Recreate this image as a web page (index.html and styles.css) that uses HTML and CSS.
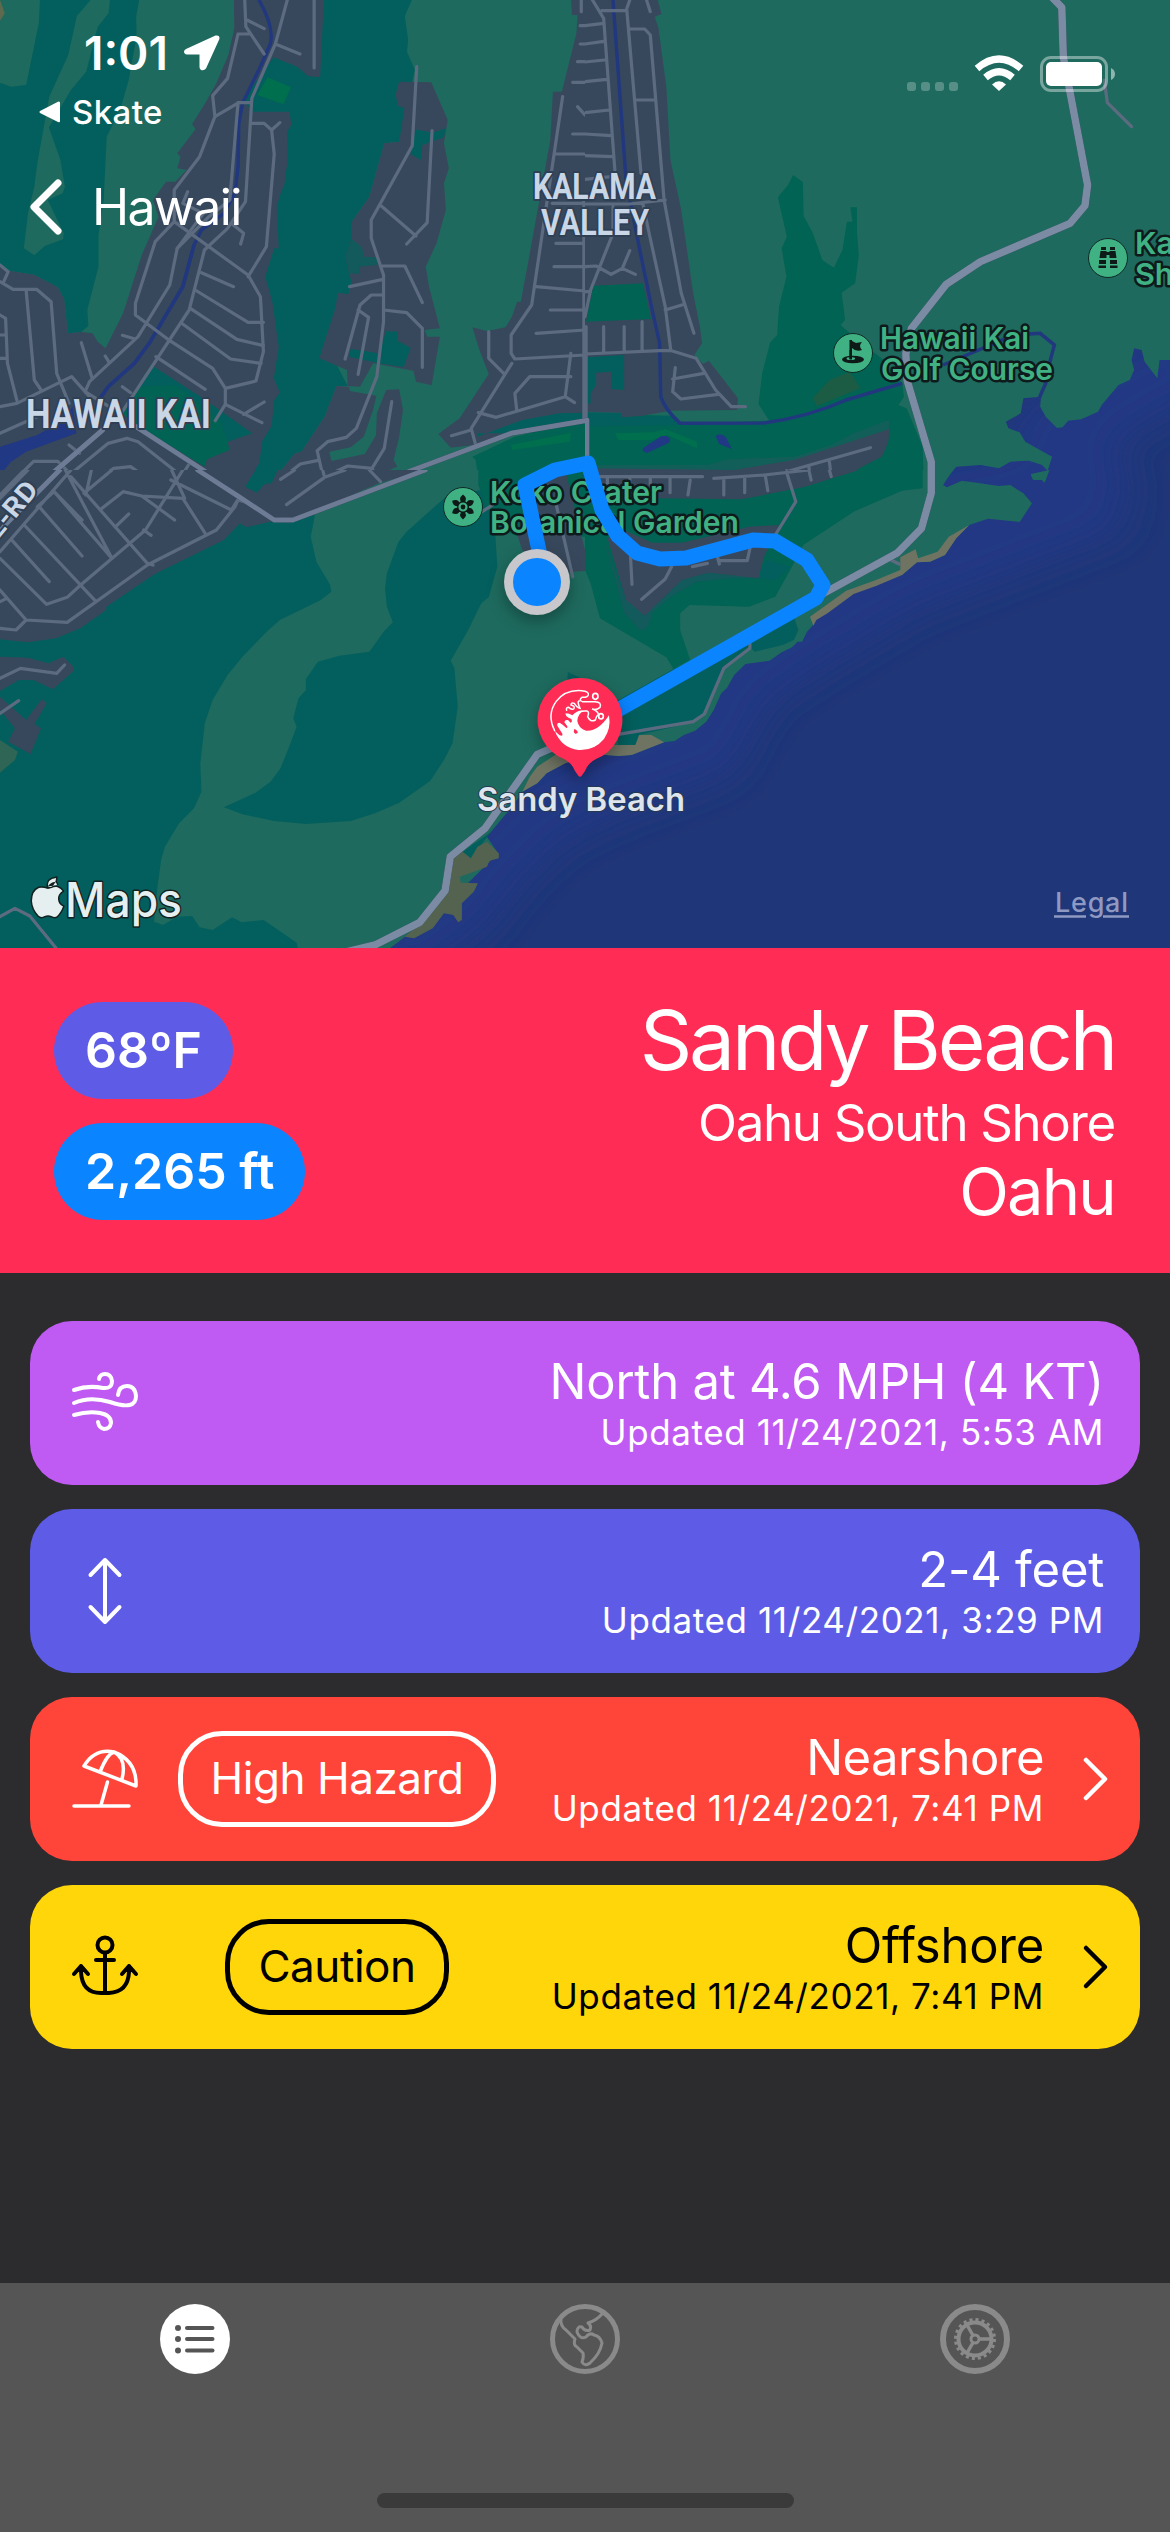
FILE: index.html
```html
<!DOCTYPE html>
<html lang="en">
<head>
<meta charset="utf-8">
<title>Sandy Beach</title>
<link rel="stylesheet" href="styles.css">
</head>
<body>
<main class="screen">
  <section class="hero">
    <svg class="map" viewBox="0 0 1170 948">
      <defs><filter id="soft" x="-20%" y="-20%" width="140%" height="140%"><feGaussianBlur stdDeviation="18"/></filter></defs>
      <rect class="deep" width="1170" height="948"/>
      <path class="shallow" filter="url(#soft)" d="M1200 350 1060 430 1080 470 980 490 1040 520 900 575 800 635 740 675 705 740 600 780 540 810 490 860 460 900 380 960"/>

      <!-- north-west tile -->
      <svg x="0" y="0" width="585" height="480" viewBox="0 0 1568 1440" preserveAspectRatio="none">
        <rect class="land" width="1568" height="1440"/>
        <path fill="#5d6a4d" d="M0 0 13 40 0 62z"/>
        <path class="forest" d="M107 0 104 70 70 255 30 260 0 248V795L24 812 92 824 155 862 172 897 182 1000 217 996 237 978 234 930 250 860 264 800V705L278 600 286 410 322 330 345 240 366 110 365 50 373 0z"/>
        <path class="land" d="M243 0 206 48 183 165 132 290 100 490 92 560 75 640 64 745 92 766 120 738 169 718 171 700 128 600 168 580 174 560 162 480 131 382 190 270 231 215 262 80 291 40 295 0z"/>
        <path class="urban" d="M627 0 628 85 612 165 580 250 550 310 515 372 524 388 475 460 484 470 475 505 500 510 470 545 445 545 410 600 425 650 380 765 330 940 283 1045 262 1025 248 1000 217 996 182 1000 172 897 155 862 92 824 24 812 0 795V1440H740L868 700V0z"/>
        <path class="forest" d="M868 0H1104L1085 48 1094 120 1091 155 1112 210 1070 425 1030 430 990 590 943 665V900L905 1100 932 1158 902 1158 870 1250 808 1355 790 1360 733 1440H665L695 1390 703 1323 728 1278 735 1200 750 1178 734 1135 747 1040 730 905 711 830 722 790 735 745 747 745 742 620 752 580 762 555 771 480 769 395 781 375 776 335 678 335 650 300 733 172 797 200 825 228 858 232z"/>
        <path class="green" d="M717 232 780 262 760 313 690 285z"/>
        <path class="urban" d="M1070 245 1156 247 1200 360 1190 430 1203 505 1190 550 1195 630 1170 730 1141 800 1150 860 1179 985 1138 990 1145 1010 1179 1010 1157 1156 1115 1145 1108 1112 1000 1090 965 1160 932 1158 930 1110 856 1075 900 920 905 878 933 883 943 850 925 770 943 715V665L990 590 1030 430 1070 425 1084 325 1068 318 1060 285z"/>
        <path class="urban" d="M902 1158 935 1160 938 1173 1009 1187 1000 1230 975 1310 940 1342 883 1355 888 1383 978 1362 1008 1305 1010 1240 1035 1170 1070 1168 1080 1230 1070 1310 1055 1380 1065 1400 1015 1422 1025 1440H733L790 1360 808 1355 870 1250z"/>
        <path class="forest" d="M1113 388 1160 398 1195 385 1190 412 1132 435 1128 480 1100 462zM1035 993 1067 995 1065 1022 1101 1043 1082 1102 1015 1090 935 1070 940 1047 1015 1060z"/>
        <path fill="#125a5b" d="M943 718 970 740 975 770 1010 772 1012 795 965 800 963 822 938 820 925 770z"/>
        <path class="urban" d="M1531 0 1533 45 1548 45 1545 100 1506 275 1482 275 1475 420 1420 760 1396 905 1386 905 1372 950 1355 982 1305 993 1266 982 1285 1050 1310 1122 1232 1255 1175 1302 1208 1343 1270 1335 1400 1285 1568 1250V0z"/>
        <path class="forest" d="M1280 1310 1400 1260 1500 1240 1568 1238V1300H1280z"/>
        <path class="park" d="M1266 1370 1380 1310 1568 1262V1440H1282L1275 1380z"/>
        <path class="green" d="M1370 1335 1530 1298 1528 1325 1372 1350z"/>
        <path class="park" d="M405 1095 550 1200 675 1300 610 1325 615 1350 555 1378 548 1400 380 1285 325 1240z"/>
        <path class="forest" d="M405 1095 550 1200 675 1300 610 1325 590 1260 470 1155 370 1160z"/>
        <path class="water" d="M0 1340 100 1305 160 1265 195 1220 205 1300 70 1355 30 1385 0 1425z"/>
        <g class="creek"><path d="M694 0Q735 80 725 130L700 195 650 310 640 370 638 500 630 580 600 640 540 690 520 735 490 860 400 1030 360 1090 290 1160 265 1200"/><path d="M520 735 490 860 400 1030 360 1090 290 1160 265 1200" stroke-width="6"/></g>
        <g class="road">
          <path d="M656 0 659 80 708 162M662 60 708 86M770 0 738 132 675 295 658 605 610 685 548 750 507 930 325 1240M738 132 804 162M842 0V204M669 102H638L610 235 570 287 576 350 640 308H672M576 350 535 470 467 570V665L416 725 363 910V945L450 1018 570 1105 604 1165V1213L702 1268M467 665 665 825 698 890 706 1055 686 1143 604 1165M672 370H708L728 390 735 462 714 740 665 830M728 390 750 368M638 308 616 600 560 650 475 745 455 855 370 1010 240 1145 228 1175 300 1225"/>
          <path d="M503 575 490 610 545 640 475 745M620 670 653 700 645 732M540 818 626 860M523 870 665 967H706M510 925 635 1018 706 1037M485 968 618 1077 700 1090M418 1070 550 1168M328 1006 360 1016M282 1068 293 1088M218 1028 247 1135M328 1160 350 1178M604 1213 577 1262M708 1206 653 1243"/>
          <path d="M0 845 35 868H98L137 905 152 1120 185 1210M0 795 22 815 8 850M70 870 92 1140 110 1170M0 945 15 955 20 1090 45 1200M0 1220 45 1210 192 1130 240 1190M0 1005H15M0 1075H18M0 1300 120 1240M40 1440 90 1384H155L205 1440M185 1335 213 1360M170 1440 290 1330 340 1315 370 1325 500 1440M260 1440 305 1405 350 1400 400 1440M505 1395 480 1440"/>
          <path d="M1117 200 1105 437 995 660V715L1028 825V965L1010 1130 955 1285 928 1312 878 1325 850 1352 868 1440M1158 392 1145 668 1090 732M1022 618 1115 708M1025 798H1085L1132 908M1026 838 937 860M1028 885H995L965 915 925 1077M960 930 988 952 960 1123M1028 930 1090 938 1132 985V1102M1050 1205 1030 1345 997 1405 1015 1440M850 1382 805 1392 750 1440M870 1430 932 1398 997 1405"/>
          <path d="M1508 290 1425 915 1370 1005V1060L1380 1077 1568 1065M1558 0V35M1555 77H1568M1555 132H1568M1548 185H1568M1535 247H1568M1548 320 1568 345M1535 402H1568M1490 462H1568M1480 610H1568M1490 730H1568M1485 800H1568M1437 860 1568 873M1475 930H1568M1437 1000 1568 990M1310 995V1075L1350 1120M1372 1090 1263 1285 1275 1335M1263 1290 1210 1307M1530 1060 1515 1190 1330 1252 1282 1238M1515 1190 1540 1208M1530 1130H1420L1380 1180 1385 1230M1565 600V1262"/>
        </g>
        <path class="road mid" d="M1568 1262 1370 1300 1035 1440M365 1280 585 1440M275 1290 120 1440"/>
      </svg>

      <!-- north-east tile -->
      <svg x="585" y="0" width="585" height="480" viewBox="0 0 1568 1440" preserveAspectRatio="none">
        <path class="land" d="M0 0H1568V1080L1540 1080 1534 1135 1500 1085 1492 1050 1472 1045 1465 1080 1472 1110 1460 1140 1430 1155 1385 1215 1375 1235 1330 1258 1295 1262 1280 1282 1265 1284 1235 1250 1220 1220 1222 1190 1175 1195 1168 1240 1128 1265 1135 1285 1165 1297 1180 1325 1252 1370 1240 1412 1225 1395 1190 1382 1140 1385 1110 1405 1060 1395 995 1400 967 1440H0zM1195 1425 1240 1412 1235 1440H1202z"/>
        <path class="park" d="M0 1240 230 1247 260 1272 494 1262 465 1212 475 1120 496 1028 515 1005 520 920 540 830 527 745 541 710 517 592 544 555 558 525 584 547 586 648 611 700 636 780 667 803 690 750 702 665 717 665 711 622H729V700L734 765 724 850 688 878 697 960 685 975 710 1000 800 1080 850 1150 855 1190 840 1215 862 1225 905 1340 908 1440H0z"/>
        <path class="forest" d="M0 1237 98 1238 100 1252 230 1247 255 1274 0 1280z"/>
        <path fill="#125f59" d="M0 1395H330L380 1378 560 1370 660 1335 720 1300 815 1260V1300L500 1410H0z"/>
        <path class="urban" d="M0 0H195L205 42 187 50 197 85 218 260 229 480 258 630 290 880 308 980 314 1030 293 1065 317 1092 332 1082 410 1195 408 1230 230 1232 150 1248 100 1252 98 1238 0 1235z"/>
        <path class="park" d="M22 857 155 850 177 957 3 965z"/>
        <path class="forest" d="M3 1072 105 1065V1170L70 1167V1115L30 1118V1155L15 1180V1210L3 1215z"/>
        <path fill="#1c5c44" d="M610 1195 655 1140 710 1115 738 1165 622 1218z"/>
        <path class="urban" d="M0 1405 400 1410 560 1380 700 1330 818 1286 812 1330 795 1370 700 1425 660 1440H0z"/>
        <path class="green" d="M80 1300 90 1320H180L220 1305 300 1345V1325L215 1287 185 1297z"/>
        <path class="water" d="M155 1345 205 1308Q235 1305 225 1328L168 1358Q153 1358 155 1345zM350 1308Q365 1298 378 1312L393 1347 360 1332z"/>
        <g class="creek"><path d="M75 0 110 540 145 740 180 930 200 1030 203 1190Q215 1230 255 1270L480 1269Q600 1250 700 1200L850 1150M960 1095 1150 1005 1220 1000 1258 1035 1245 1090 1235 1150 1215 1200"/></g>
        <g class="road">
          <path d="M20 0 50 55 80 510M45 32H110L120 0M165 0 175 35M112 30 150 520M118 87H160L175 105 212 600 258 880 292 1000M0 77 50 70M0 132 50 124M0 186 52 180M0 245 58 238M0 338 65 330M0 402 70 407M0 467 75 470M133 300H188M0 538 70 530M0 612H120L215 600M155 610 170 690 215 920 230 1052M215 930 262 914M75 620V700L15 870 0 950M0 800 30 798 70 823 100 805 135 823M100 805 120 752M50 980V1055M105 980V1055M153 965V1050M0 1062 200 1052H232L298 1075 350 1170 392 1220H430M242 1103 235 1175 257 1197 357 1183M235 1137 318 1120M3 980V1260M0 875H15M0 1430H315M345 1435 540 1415 765 1343M540 1412 548 1440M600 1400 605 1440M655 1385 660 1430M60 1430V1440M120 1430V1440M175 1430V1440M430 1430V1440"/>
          <path d="M1392 240 1400 308 1465 380"/>
        </g>
        <path class="road mid" d="M5 1260V1400"/>
        <path class="road major" d="M1250 -10 1278 22 1282 170 1347 555 1340 617 1300 670 1060 785 968 853 875 985 860 1060 863 1140 928 1385V1440"/>
      </svg>

      <!-- south-west tile -->
      <svg x="0" y="470" width="585" height="478" viewBox="0 0 1568 1434" preserveAspectRatio="none">
        <path class="land" d="M0 0H1568V860L1515 880 1465 910 1440 940 1400 965 1380 1000 1305 1100 1335 1150 1200 1300 1045 1435H0z"/>
        <path class="forest" d="M0 0H700L845 130 833 200 848 275 885 345 888 365 860 390 750 450 715 485 650 560 610 615 570 690 549 760 537 880 540 965 520 1015 480 1060 442 1130 432 1170 422 1250 413 1355 437 1365 475 1340 515 1338 535 1372 570 1380 622 1342 648 1357 707 1350 795 1418 800 1440H0z"/>
        <path class="urban" d="M0 0H1140L1015 40 780 155 735 152 660 172 643 160 600 210 415 312 285 410V420L215 475 150 505 75 517 0 508z"/>
        <path class="urban" d="M0 560 75 563 130 580 170 560 197 590 195 605 142 658 90 630H50L0 663zM0 680 70 750 112 687 125 700 92 762 110 775 82 852 22 815 40 775 0 720z"/>
        <path class="forest" d="M685 0H745L728 40 710 42 688 68 657 50z"/>
        <path fill="#2f6555" d="M0 810 48 845 40 870 0 908z"/>
        <path class="forest" d="M1195 80 1090 185 1068 215 1037 310 1032 355 1037 410 1053 457 1030 483 990 545 910 557 852 575 820 627V660L800 685 786 745 795 770 775 830 752 895 725 935 685 968 600 1012 650 1033 735 1053 820 1062 940 1053 1005 1030 1070 998 1153 933 1190 870 1213 820 1227 710 1218 595 1208 572 1255 480 1290 400 1310 382 1333 290 1325 150 1290 60z"/>
        <path class="park" d="M1282 0H1568V200L1390 200 1325 170 1282 45z"/>
        <path class="urban" d="M1385 190 1430 30 1515 0 1568 240V303L1470 310 1400 240z"/>
        <path class="forest" d="M1522 606 1568 630V640H1520zM1190 1262 1200 1170 1240 1145 1305 1095 1320 1080 1262 1165z"/>
        <path fill="#53634f" d="M1305 1115 1280 1130 1262 1165 1240 1145 1215 1165 1200 1270 1130 1360 1045 1434 1085 1400 1110 1405 1160 1375 1190 1330 1215 1335 1228 1357 1238 1350V1300L1270 1265 1281 1240 1235 1238 1232 1220 1270 1205 1305 1190 1312 1172 1337 1165V1150z"/>
        <path class="sand" d="M1495 850 1440 890 1420 920 1400 965 1440 940 1465 910 1515 880 1568 862V840z"/>
        <g class="road">
          <path d="M0 75 65 0M75 0 0 85M175 0 300 265M225 70 300 0M145 65 220 150M190 20 395 280 410 285M270 118 330 65 380 78 468 150M490 0 390 180 213 348 180 382 125 403 0 265M310 170 345 132M385 180 405 196M245 0 230 75M380 78 490 85 550 190M495 85 460 0M458 30 620 120 640 85 630 110 580 180 395 285 180 457 70 450 0 360M0 245 105 110 190 0M105 110 220 258M100 110 145 65 300 265M65 165 255 392M30 208 132 335M0 475 43 480 70 450M0 395 18 385M638 90 655 95M752 28 790 0M865 0 870 22 768 104M870 22 925 0M990 0 1020 35M0 625 55 595 152 610 173 585M0 730 50 692M0 1340 40 1315 80 1338 150 1434M1285 130 1320 105M1490 100 1535 320"/>
        </g>
        <path class="road mid" d="M1140 0 785 150H735L640 80 530 0M160 0 0 180"/>
        <path class="road major" d="M1568 790 1440 853 1300 1075 1207 1160 1193 1262 1125 1357 1005 1425 930 1445"/>
      </svg>

      <!-- south-east tile -->
      <svg x="585" y="470" width="585" height="478" viewBox="0 0 1568 1434" preserveAspectRatio="none">
        <path class="land" d="M0 0H985L960 45 970 52 1010 32 1050 38 1110 48 1140 45 1175 70 1198 100 1165 156 1080 146 1030 165 995 205 965 255 925 275 890 277 850 315 820 318 780 348 745 352 700 375 650 420 615 450 610 467 595 485 582 515 570 515 555 532 525 548 495 572 430 582 400 615 380 655 365 670 345 720 325 755 295 782 265 795 240 813 212 817 125 855 90 858 0 850zM1195 12 1245 0 1232 38 1222 28 1200 28z"/>
        <path class="park" d="M0 0H905V55L850 62 720 125 585 225 550 300 510 380 440 410 280 405 255 430V480L282 570 237 597 218 562 40 445 15 340 0 300z"/>
        <path class="forest" d="M0 640 90 690 237 597 560 440 572 480 560 510 530 525 455 545 440 530 372 595 320 735 290 757 145 795 135 825H88V790L0 810z"/>
        <path class="forest" d="M485 270 550 290 510 330 465 325z"/>
        <path fill="#125a5b" d="M50 205 110 390 160 437 260 330 330 308 465 325 390 325 300 335 230 380 180 430Q170 490 145 478L105 430z"/>
        <path class="urban" d="M0 0H735L700 12 590 50 420 88 200 85 0 60z"/>
        <path class="urban" d="M60 205 105 180 180 218 260 218 440 170 520 165 480 260 465 325 330 308 260 330 160 437 110 390z"/>
        <path class="sand" d="M1030 165 975 200 945 245 893 265 886 238 845 262V300L780 330 700 362 603 440 612 467 620 450 650 430 720 372 780 348 850 315 890 277 925 275 965 255 995 205zM145 795H178L212 817 125 855 90 858 0 850V825H135z"/>
        <g class="road">
          <path d="M0 20H315M345 25 480 15 600 0M60 20V50M120 20V60M175 20V60M228 25V68M282 30 276 75M372 25V75M428 20V68M483 15 490 62M540 5 565 95 510 195M600 0 606 30M655 0 660 20M122 260 126 343M232 290 215 327 152 388M288 290 328 280M355 260 360 282M358 272H435L442 235M442 520V535L372 595 320 732 290 755 90 793M820 270 842 282"/>
        </g>
        <path class="road major" d="M928 0V70L902 175 838 248 640 370"/>
      </svg>

      <g class="place">
        <text x="26" y="428" font-size="41" textLength="185" lengthAdjust="spacingAndGlyphs">HAWAII KAI</text>
        <text x="533" y="199" font-size="36" textLength="123" lengthAdjust="spacingAndGlyphs">KALAMA</text>
        <text x="541" y="235" font-size="36" textLength="108" lengthAdjust="spacingAndGlyphs">VALLEY</text>
        <text x="0" y="0" font-size="27" transform="translate(-3 541) rotate(-50)" textLength="66" lengthAdjust="spacingAndGlyphs">E-RD</text>
      </g>
      <g class="poi">
        <text x="880" y="349" textLength="149" lengthAdjust="spacingAndGlyphs">Hawaii Kai</text>
        <text x="881" y="380" textLength="172" lengthAdjust="spacingAndGlyphs">Golf Course</text>
        <text x="1135" y="254">Kaiwi</text>
        <text x="1135" y="285">Shoreline</text>
        <text x="490" y="503" textLength="172" lengthAdjust="spacingAndGlyphs">Koko Crater</text>
        <text x="490" y="533" textLength="249" lengthAdjust="spacingAndGlyphs">Botanical Garden</text>
      </g>
      <g class="poi-dot"><circle cx="853" cy="353" r="19.5"/><circle cx="1108" cy="258" r="19.5"/><circle cx="463" cy="507" r="19.5"/></g>
      <g fill="#0d1a18">
        <path d="M849.500 340H852V341L856 343 862 342Q858 346 862 350 856 352 852 348V359H849.500z"/><path fill-rule="evenodd" d="M842 359.500a11 3.800 0 1 0 22 0a11 3.800 0 1 0-22 0M846.500 358.500a4.300 1.500 0 1 0 8.600 0a4.300 1.500 0 1 0-8.600 0"/><path d="M849.500 350H852V359.500H849.500z"/>
        <path d="M1101 247h5v3h-5zM1110 247h5v3h-5zM1100.500 251h6v7h-7zM1109.500 251h6l1 7h-7zM1106 252h4v3h-4zM1099 260h7v4h-7zM1110 260h7v4h-7zM1098.500 265.500h7.500v2.500h-7.500zM1110 265.500h7.500v2.500H1110z"/>
        <g transform="translate(463 507)"><path id="petal" d="M0-3Q-6-8 0-12.500Q6-8 0-3z"/><use href="#petal" transform="rotate(60)"/><use href="#petal" transform="rotate(120)"/><use href="#petal" transform="rotate(180)"/><use href="#petal" transform="rotate(240)"/><use href="#petal" transform="rotate(300)"/><circle r="6"/><circle r="3.500" fill="none" stroke="#40b183" stroke-width="2.200"/></g>
      </g>

      <path class="route" d="M541 560 525 485 555 470 588 463 602 510 618 536 637 553 660 559 686 558 753 540 775 541 807 560 823 585 816 598 600 720"/>
      <g class="drop"><circle cx="537" cy="582" r="33" fill="#c7c7cc"/></g>
      <circle cx="537" cy="582" r="24" fill="#0a84ff"/>

      <g class="drop"><path fill="#ff2d55" d="M580 678a42 42 0 0 1 16 81Q588 763 585 771L581.500 776Q580 777.500 578.500 776L575 771Q572 763 564 759A42 42 0 0 1 580 678z"/></g>
      <g transform="translate(520 660) scale(.33333)">
        <path fill="#fff" d="M104 212Q110 218 119 226Q130 230 127 221L112 197Q110 188 119 188Q131 195 139 204Q145 203 141 197L133 187Q134 178 144 180L152 188Q158 186 154 177Q134 170 137 160Q148 160 157 166Q172 150 190 152Q172 164 172 183Q176 206 198 212Q235 215 267 166Q274 205 252 237Q222 273 175 270Q125 264 104 212z"/>
        <path fill="#ff2d55" d="M164 206Q158 217 166 221Q176 221 172 213z"/>
        <path fill="none" stroke="#fff" stroke-width="4.500" stroke-linecap="round" d="M104 212Q80 165 108 125Q135 88 185 92Q208 94 205 105Q202 113 186 112Q175 120 187 125H225Q246 126 240 142Q230 151 216 147Q232 151 236 164M140 151Q137 142 146 142Q158 152 162 145Q165 138 153 135Q153 126 163 130Q172 144 180 145Q170 122 178 123M172 160Q180 151 201 153Q209 156 203 170Q211 188 226 180Q230 165 236 164"/>
        <ellipse cx="226" cy="109" rx="8" ry="9" fill="none" stroke="#fff" stroke-width="5"/><ellipse cx="243" cy="169" rx="7" ry="8" fill="none" stroke="#fff" stroke-width="5"/>
      </g>
      <text class="beach-label" x="477" y="811" textLength="208" lengthAdjust="spacingAndGlyphs">Sandy Beach</text>

      <g class="maps-mark"><path d="M57 885C56 880 52 882 48 886C48 880 51 879 56 878Q56 883 52 886.500Q49 887.500 48 886.500M48 889C51 889 54 886 58 887.500Q61 888.500 62.500 891Q57.500 894 58 899.500Q58.500 904.500 63 906.500Q60.500 913 56.500 916.500Q54.500 917.500 51.500 916Q48 914.500 44.500 916Q41 918 38.500 915.500Q32.500 909 32 901Q32 891 39 888Q42 887 48 889z"/><text x="65" y="917" textLength="117" lengthAdjust="spacingAndGlyphs">Maps</text></g>
      <text class="legal" x="1055" y="912" textLength="73">Legal</text>
      <path stroke="#8f99c2" stroke-width="2.500" d="M1054 916.500H1086M1103 916.500H1129"/>
    </svg>

    <div class="overlay">
      <div class="status">
        <div class="clock"><span>1:01</span><svg width="36" height="36" viewBox="0 0 36 36"><path fill="#fff" d="M31.500.6Q36 0 35.400 4L22 33.500Q20 36 17 35Q15.500 34 15.500 32V19.500H3Q0 19 0 16.500Q0 15 2 14z"/></svg></div>
        <svg class="indicators" width="210" height="40" viewBox="905 54 210 40">
          <g fill="#fff" opacity=".25"><rect x="907" y="82" width="9" height="9" rx="3"/><rect x="921" y="82" width="9" height="9" rx="3"/><rect x="935" y="82" width="9" height="9" rx="3"/><rect x="949" y="82" width="9" height="9" rx="3"/></g>
          <g fill="none" stroke="#fff" stroke-width="7"><path d="M977 68.500Q999 49.500 1021 68.500"/><path d="M985.500 77.500Q999 66 1012.500 77.500"/></g>
          <path fill="#fff" d="M992 84.500Q999 78 1006 84.500L999 91z"/>
          <rect x="1041.500" y="57.500" width="65" height="33" rx="9.500" fill="none" stroke="#fff" stroke-opacity=".4" stroke-width="3"/>
          <rect x="1046" y="62" width="56" height="24" rx="5" fill="#fff"/><path fill="#fff" fill-opacity=".5" d="M1111 68Q1115 70 1115 74Q1115 78 1111 80z"/>
        </svg>
      </div>
      <div class="return"><svg width="22" height="22" viewBox="0 0 22 22"><path fill="#fff" d="M19 .7Q21-.3 21 2V20Q21 22 19 21L1 12Q0 11 1 10z"/></svg><span>Skate</span></div>
      <div class="back"><svg width="34" height="58" viewBox="0 0 34 58"><path d="M29 5 5 29 29 53" fill="none" stroke="#fff" stroke-width="7" stroke-linecap="round" stroke-linejoin="round"/></svg><span>Hawaii</span></div>
    </div>
  </section>

  <header class="spot">
    <div class="pills"><span class="pill temp">68ºF</span><span class="pill dist">2,265 ft</span></div>
    <div class="names"><h1>Sandy Beach</h1><p class="region">Oahu South Shore</p><p class="island">Oahu</p></div>
  </header>

  <section class="cards">
    <article class="card wind">
      <svg class="icon" viewBox="0 0 70 70"><g fill="none" stroke="currentColor" stroke-width="4" stroke-linecap="round"><path d="M4 22Q18 17 33 20Q42 21 42 13Q41 6 35 6Q30 6 29 11M4 35Q20 28 40 34Q66 43 66 28Q65 18 57 18Q49 18 48 27M4 47Q18 43 30 45Q41 47 41 55Q40 61 34 61Q29 60 28 54"/></g></svg>
      <div class="info"><h2>North at 4.6 MPH (4 KT)</h2><p>Updated 11/24/2021, 5:53 AM</p></div>
    </article>
    <article class="card waves">
      <svg class="icon" viewBox="0 0 70 70"><path d="M35 4V66M20.500 19 35 4 49.500 19M20.500 51 35 66 49.500 51" fill="none" stroke="currentColor" stroke-width="4" stroke-linecap="round" stroke-linejoin="round"/></svg>
      <div class="info"><h2>2-4 feet</h2><p>Updated 11/24/2021, 3:29 PM</p></div>
    </article>
    <article class="card near">
      <svg class="icon" viewBox="0 0 70 70"><g fill="none" stroke="currentColor" stroke-width="3.500" stroke-linecap="round" stroke-linejoin="round"><path d="M4 62H59M37.500 38 31 61"/><path d="M14 22Q25 4 44 8Q67 17 66 42zM30 28Q37 10 44 8Q57 15 52 35"/></g></svg>
      <div class="slot"><span class="badge">High Hazard</span></div>
      <div class="info"><h2 class="tight">Nearshore</h2><p>Updated 11/24/2021, 7:41 PM</p></div>
      <svg class="chev" viewBox="0 0 28 46"><path d="M4 4 23 23 4 42"/></svg>
    </article>
    <article class="card off">
      <svg class="icon" viewBox="0 0 70 70"><g fill="none" stroke="currentColor" stroke-width="4" stroke-linecap="round" stroke-linejoin="round"><circle cx="35" cy="13" r="7.500"/><path d="M35 21V60M26 28H44M11 34V40Q12 61 31 61H39Q58 60 59 40V34M4 42 11 34 18 42M52 42 59 34 66 42"/></g></svg>
      <div class="slot"><span class="badge caution">Caution</span></div>
      <div class="info"><h2>Offshore</h2><p>Updated 11/24/2021, 7:41 PM</p></div>
      <svg class="chev" viewBox="0 0 28 46"><path d="M4 4 23 23 4 42"/></svg>
    </article>
  </section>

  <nav class="tabs">
    <div class="tab-row">
      <svg viewBox="0 0 70 70"><circle cx="35" cy="35" r="35" fill="#fff"/><g fill="#555"><circle cx="18" cy="24" r="3"/><circle cx="18" cy="35" r="3"/><circle cx="18" cy="46.500" r="3"/><rect x="25" y="22" width="29.500" height="4" rx="2"/><rect x="25" y="33" width="29.500" height="4" rx="2"/><rect x="25" y="44.500" width="29.500" height="4" rx="2"/></g></svg>
      <svg viewBox="0 0 70 70"><g fill="none" stroke="#8a8a8a" stroke-linejoin="round" stroke-linecap="round"><circle cx="35" cy="35" r="32.500" stroke-width="5"/><path stroke-width="3" d="M11 14Q10 22 16 26L25 35Q23 41 27 43L33 49Q34 53 32 58Q35 63 40 59Q50 50 52 39Q50 32 44 31Q40 28 36 33Q30 36 27 28Q27 22 32 23Q35 28 40 26Q42 22 38 19Q47 16 52 10"/></g></svg>
      <svg viewBox="0 0 70 70"><g fill="none" stroke="#8a8a8a"><circle cx="35" cy="35" r="32" stroke-width="6"/><circle cx="35" cy="35" r="16.500" stroke-width="4"/><circle cx="35" cy="35" r="19.500" stroke-width="3" stroke-dasharray="3.060 3.060"/><circle cx="35" cy="35" r="4" stroke-width="3"/><path stroke-width="3.500" d="M39 35H52M33 31.500 26.500 20M33 38.500 26.500 50"/></g></svg>
    </div>
    <div class="home"></div>
  </nav>
</main>
</body>
</html>
```
FILE: styles.css
```css
* { box-sizing: border-box; margin: 0; padding: 0; }
body { width: 1170px; height: 2532px; overflow: hidden; background: #2c2c2e; color: #fff; font-family: Inter, "Liberation Sans", sans-serif; }
.screen { display: flex; flex-direction: column; width: 1170px; height: 2532px; }
h1, h2 { font-weight: 400; }
svg { display: block; flex: none; }

.hero { display: grid; height: 948px; flex: none; }
.map, .overlay { grid-area: 1 / 1; }
.map { width: 1170px; height: 948px; overflow: hidden; }
.overlay { z-index: 1; }

.deep { fill: #1f3678; }
.shallow { fill: none; stroke: #213884; stroke-width: 80; }
.land { fill: #1e6a5e; }
.forest { fill: #035f5d; }
.park { fill: #006354; }
.green { fill: #006f4d; }
.urban { fill: #38485c; }
.water { fill: #213884; }
.sand { fill: #6e7362; }
.creek path { fill: none; stroke: #21387f; stroke-width: 3.500; vector-effect: non-scaling-stroke; }
.road, .road path { fill: none; stroke: #5d6b80; stroke-width: 3.200; stroke-linecap: round; stroke-linejoin: round; vector-effect: non-scaling-stroke; }
.road.mid { stroke: #6d7c94; stroke-width: 5; filter: drop-shadow(0 0 2px #2a394c); }
.road.major { stroke: #7a8ba3; stroke-width: 7.500; filter: drop-shadow(0 0 2px #2a394c); }

.map text { paint-order: stroke; stroke-linejoin: round; }
.place text { font-family: Roboto, sans-serif; font-weight: 700; fill: #c9d6e6; stroke: #2f3f54; stroke-width: 4px; }
.poi text { font-size: 30.500px; font-weight: 600; fill: #40b183; stroke: #0f1a1c; stroke-width: 5px; }
.poi-dot circle { fill: #40b183; stroke: #0f2a26; stroke-width: 1; }
.route { fill: none; stroke: #0a84ff; stroke-width: 15; stroke-linejoin: round; }
.drop { filter: drop-shadow(0 6px 8px rgba(0, 0, 0, .3)); }
.map .beach-label { font-size: 33px; font-weight: 600; fill: #dfe5ec; stroke: #26384f; stroke-width: 2px; }
.maps-mark { fill: #e6eff0; stroke: #10211f; stroke-width: 3px; paint-order: stroke; }
.maps-mark text { font-size: 48px; font-weight: 500; }
.legal { font-size: 27px; font-weight: 500; fill: #8f99c2; }

.overlay { display: flex; flex-direction: column; align-items: flex-start; }
.status { display: flex; justify-content: space-between; align-items: flex-start; width: 100%; height: 96px; padding: 24px 55px 0 84px; }
.clock { display: flex; gap: 16px; align-items: center; font-size: 46px; line-height: 58px; font-weight: 600; }
.indicators { margin-top: 30px; }
.return { display: flex; align-items: center; gap: 11px; height: 32px; padding-left: 39px; font-size: 33px; line-height: 32px; font-weight: 500; letter-spacing: .4px; }
.back { display: flex; align-items: center; gap: 29px; margin-top: 50px; padding-left: 29px; font-size: 50px; line-height: 58px; letter-spacing: -1.600px; }

.spot { display: flex; justify-content: space-between; flex: none; height: 325px; padding: 54px 55px 0 54px; background: #ff2d55; }
.pills { display: flex; flex-direction: column; align-items: flex-start; gap: 24px; }
.pill { height: 97px; padding: 0 31px; border-radius: 49px; font-size: 50px; line-height: 97px; font-weight: 600; }
.temp { background: #5e5ce6; }
.dist { background: #0a84ff; }
.names { text-align: right; }
.names h1 { font-size: 82px; line-height: 78px; letter-spacing: -3.200px; }
.region { margin-top: 10px; font-size: 51px; line-height: 66px; letter-spacing: -1.350px; }
.island { font-size: 65px; line-height: 72px; letter-spacing: -1.800px; }

.cards { display: flex; flex: 1; flex-direction: column; gap: 24px; padding: 48px 30px 0; }
.card { display: flex; align-items: center; height: 164px; padding: 0 36px 0 40px; border-radius: 42px; }
.wind { background: #bf5af2; }
.waves { background: #5e5ce6; }
.near { background: #ff453a; }
.off { background: #ffd60a; color: #000; }
.icon { width: 70px; height: 70px; }
.info { flex: 1; padding-top: 1px; text-align: right; white-space: nowrap; }
.info h2 { font-size: 49px; line-height: 58px; letter-spacing: -.250px; }
.info h2.tight { letter-spacing: -.500px; }
.info p { font-size: 35px; line-height: 43px; letter-spacing: .600px; }
.slot { display: flex; justify-content: center; width: 320px; margin-left: 37px; }
.badge { height: 96px; padding: 0 28px; border: 5px solid #fff; border-radius: 44px; font-size: 44px; line-height: 85px; letter-spacing: -.450px; white-space: nowrap; }
.caution { border-color: #000; }
.chev { width: 28px; height: 46px; margin-left: 38px; margin-right: -6px; fill: none; stroke: currentColor; stroke-width: 4.500; stroke-linecap: round; stroke-linejoin: round; }

.tabs { display: flex; flex: none; flex-direction: column; justify-content: space-between; align-items: center; height: 249px; padding: 21px 0 24px; background: #555; }
.tab-row { display: grid; grid-template-columns: repeat(3, 1fr); justify-items: center; width: 100%; }
.tab-row svg { width: 70px; height: 70px; }
.home { width: 417px; height: 15px; border-radius: 8px; background: #3a3a3a; }
```
